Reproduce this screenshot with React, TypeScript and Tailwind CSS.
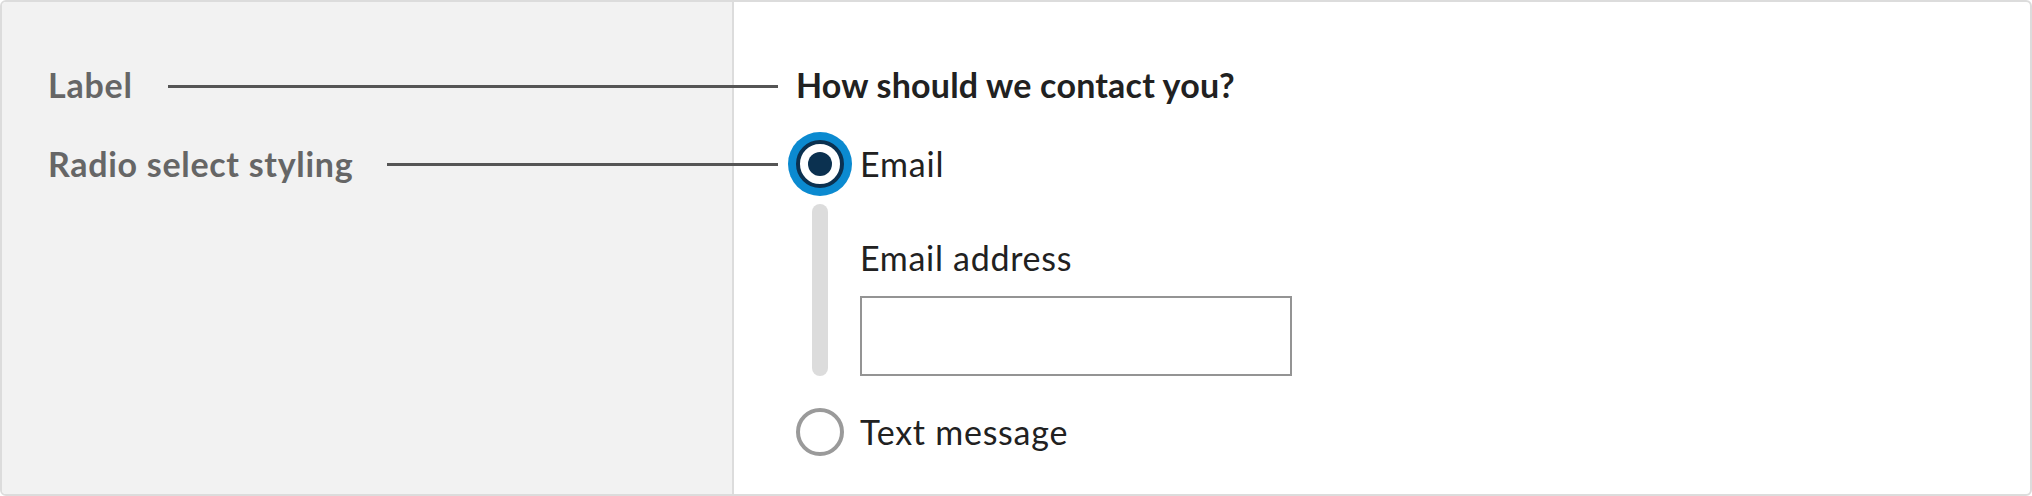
import React from "react";

const font = { fontFamily: "Lato, 'Noto Sans', sans-serif" };

function Radio({ checked }: { checked: boolean }) {
  if (checked) {
    return (
      <span className="flex h-[48px] w-[48px] shrink-0 items-center justify-center rounded-full border-4 border-[#0b3150] bg-white shadow-[0_0_0_8px_#0b8ad0]">
        <span className="h-[24px] w-[24px] rounded-full bg-[#0b3150]" />
      </span>
    );
  }
  return <span className="h-[48px] w-[48px] shrink-0 rounded-full border-4 border-[#9a9a9a] bg-white" />;
}

export default function App() {
  return (
    <div style={font} className="flex h-[496px] w-[2032px] overflow-hidden rounded-[6px] border-2 border-[#dcdcdc] bg-white">
      {/* Annotation panel */}
      <div className="relative z-10 w-[732px] shrink-0 border-r-2 border-[#dcdcdc] bg-[#f2f2f2] pl-[46px] pt-[63px]">
        <div className="-mr-[46px] flex h-[40px] items-center">
          <span className="text-[34px] font-bold leading-[40px] tracking-[0.8px] text-[#666666]">Label</span>
          <span className="ml-[35px] mt-[3px] h-[3px] flex-1 bg-[#555555]" />
        </div>
        <div className="-mr-[46px] mt-[35px] flex h-[48px] items-center">
          <span className="text-[34px] font-bold leading-[40px] tracking-[0.7px] text-[#666666]">Radio select styling</span>
          <span className="ml-[34px] mt-[1px] h-[3px] flex-1 bg-[#555555]" />
        </div>
      </div>

      {/* Example panel */}
      <div className="flex-1 pl-[62px] pt-[63px] text-[#212121]">
        <div className="text-[34px] font-bold leading-[40px] tracking-[0.2px]">How should we contact you?</div>
        <div className="mt-[35px] flex flex-col">
          <label className="flex h-[48px] items-center gap-[16px]">
            <Radio checked />
            <span className="text-[34px] leading-[40px] tracking-[0.8px]">Email</span>
          </label>
          <div className="mt-[16px] flex">
            <span className="ml-[16px] w-[16px] rounded-full bg-[#dcdcdc]" />
            <div className="flex flex-col pl-[32px] pt-[34px]">
              <span className="text-[34px] leading-[40px] tracking-[0.7px]">Email address</span>
              <div className="mt-[18px] h-[80px] w-[432px] border-2 border-[#949494] bg-white" />
            </div>
          </div>
          <label className="mt-[32px] flex h-[48px] items-center gap-[16px]">
            <Radio checked={false} />
            <span className="text-[34px] leading-[40px] tracking-[0.75px]">Text message</span>
          </label>
        </div>
      </div>
    </div>
  );
}
